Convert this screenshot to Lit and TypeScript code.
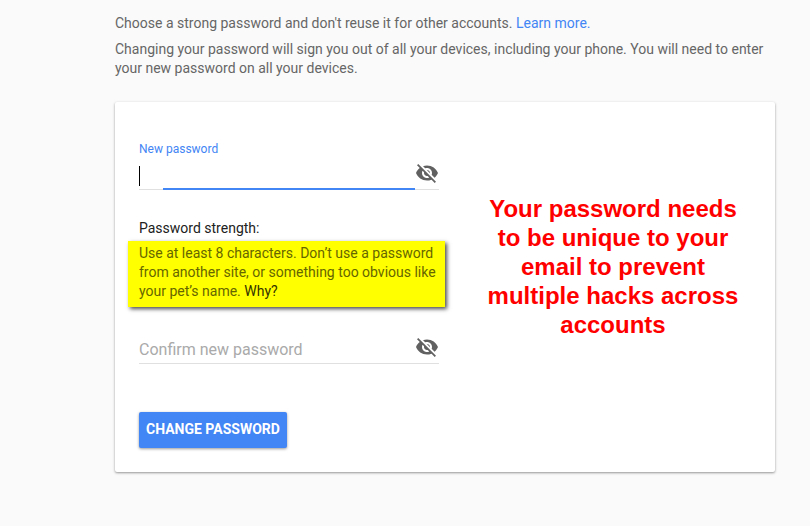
import { LitElement, html, css, svg } from "lit";
import { customElement, property } from "lit/decorators.js";
import { classMap } from "lit/directives/class-map.js";

const visibilityOff = svg`<path d="M12 7c2.76 0 5 2.24 5 5 0 .65-.13 1.26-.36 1.83l2.92 2.92c1.51-1.26 2.7-2.89 3.43-4.75-1.73-4.39-6-7.5-11-7.5-1.4 0-2.74.25-3.98.7l2.16 2.16C10.74 7.13 11.35 7 12 7zM2 4.27l2.28 2.28.46.46C3.08 8.3 1.78 10.02 1 12c1.73 4.39 6 7.5 11 7.5 1.55 0 3.03-.3 4.38-.84l.42.42L19.73 22 21 20.73 3.27 3 2 4.27zM7.53 9.8l1.55 1.55c-.05.21-.08.43-.08.65 0 1.66 1.34 3 3 3 .22 0 .44-.03.65-.08l1.55 1.55c-.67.33-1.41.53-2.2.53-2.76 0-5-2.24-5-5 0-.79.2-1.53.53-2.2zm4.31-.78l3.15 3.15.02-.16c0-1.66-1.34-3-3-3l-.17.01z"/>`;

@customElement("password-field")
export class PasswordField extends LitElement {
  @property() label = "";
  @property({ type: Boolean }) active = false;

  static styles = css`
    :host {
      display: block;
    }
    .field {
      position: relative;
      display: flex;
      flex-direction: column;
      border-bottom: 1px solid #e0e0e0;
    }
    .label {
      height: 16px;
      font-size: 12px;
      line-height: 16px;
      color: #4285f4;
      visibility: hidden;
    }
    .active .label {
      visibility: visible;
    }
    .row {
      display: flex;
      align-items: center;
      height: 32px;
    }
    input {
      flex: 1;
      align-self: flex-end;
      min-width: 0;
      height: 20px;
      margin: 0 0 3px;
      padding: 0;
      border: 0;
      outline: 0;
      background: transparent;
      font: 16px/20px Roboto, sans-serif;
      color: #212121;
    }
    input::placeholder {
      color: #aaa;
      opacity: 1;
    }
    .active input {
      border-left: 1px solid #000;
    }
    .toggle {
      display: flex;
      padding: 0;
      border: 0;
      background: none;
    }
    svg {
      width: 24px;
      height: 24px;
      fill: #616161;
    }
    .active::after {
      content: "";
      position: absolute;
      left: 8%;
      right: 8%;
      bottom: -1px;
      height: 2px;
      background: #4285f4;
    }
  `;

  render() {
    return html`<div class=${classMap({ field: true, active: this.active })}>
      <label class="label" for="box">${this.label}</label>
      <div class="row">
        <input id="box" type="password" aria-label=${this.label} placeholder=${this.active ? "" : this.label} />
        <button class="toggle" type="button" aria-label="Show password">
          <svg viewBox="0 0 24 24" aria-hidden="true">${visibilityOff}</svg>
        </button>
      </div>
    </div>`;
  }
}

@customElement("app-root")
export class AppRoot extends LitElement {
  static styles = css`
    :host {
      display: block;
      min-height: 100vh;
      box-sizing: border-box;
      padding: 14px 35px 54px 115px;
      background: #fafafa;
      font: 14px/19px Roboto, sans-serif;
      color: #666;
    }
    p {
      margin: 0;
    }
    a {
      color: #4285f4;
      text-decoration: none;
    }
    .intro {
      display: flex;
      flex-direction: column;
      gap: 7px;
    }
    .card {
      display: flex;
      margin-top: 24px;
      padding: 39px 24px 24px;
      background: #fff;
      border-radius: 2px;
      box-shadow: 0 1px 3px rgba(0, 0, 0, 0.24), 0 1px 2px rgba(0, 0, 0, 0.2);
    }
    .form {
      flex: 0 0 300px;
    }
    .strength {
      margin-top: 29px;
      color: #212121;
    }
    .tip {
      margin: 3px -6px 0 -11px;
      padding: 3px 8px 6px 11px;
      background: #ff0;
      color: #666600;
      box-shadow: 2px 2px 4px rgba(0, 0, 0, 0.7);
    }
    .tip a {
      color: #333300;
    }
    .confirm {
      margin-top: 8px;
    }
    .submit {
      display: block;
      height: 36px;
      margin-top: 48px;
      padding: 0 7px 2px;
      border: 0;
      border-radius: 2px;
      background: #4285f4;
      color: #fff;
      font: bold 14px/34px Roboto, sans-serif;
      white-space: nowrap;
      box-shadow: 0 1px 3px rgba(0, 0, 0, 0.4);
    }
    .note {
      flex: 1;
      margin-top: 53px;
      padding: 0 10px 0 46px;
      color: #f00;
      font: bold 24px/29px "Liberation Sans", Arial, sans-serif;
      text-align: center;
    }
  `;

  render() {
    return html`
      <div class="intro">
        <p>Choose a strong password and don't reuse it for other accounts. <a href="#">Learn more.</a></p>
        <p>Changing your password will sign you out of all your devices, including your phone. You will need to enter your new password on all your devices.</p>
      </div>
      <main class="card">
        <form class="form">
          <password-field label="New password" active></password-field>
          <p class="strength">Password strength:</p>
          <p class="tip">Use at least 8 characters. Don’t use a password from another site, or something too obvious like your pet’s name. <a href="#">Why?</a></p>
          <password-field class="confirm" label="Confirm new password"></password-field>
          <button class="submit" type="button">CHANGE PASSWORD</button>
        </form>
        <p class="note">Your password needs<br />to be unique to your<br />email to prevent<br />multiple hacks across<br />accounts</p>
      </main>
    `;
  }
}
